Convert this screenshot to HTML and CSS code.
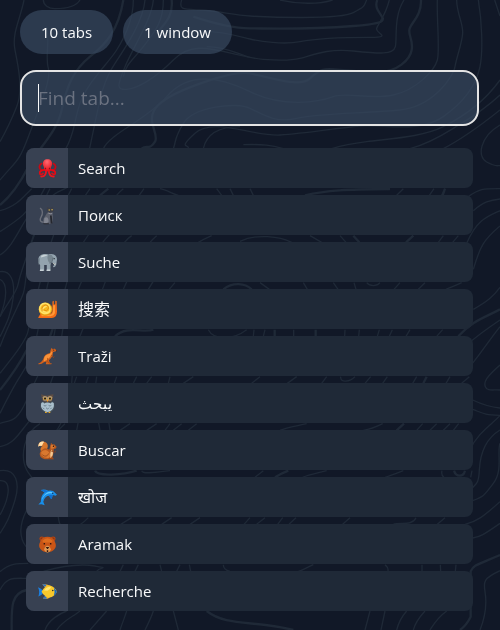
FILE: index.html
```html
<!DOCTYPE html>
<html lang="en">
<head>
  <meta charset="UTF-8">
  <meta name="viewport" content="width=device-width, initial-scale=1.0">
  <title>Find tab</title>
  <link rel="stylesheet" href="styles.css">
</head>
<body>

<!-- Topographic background -->
<svg class="topo" viewBox="0 0 1500 1890" preserveAspectRatio="xMidYMin slice" aria-hidden="true">
  <g class="thin">
    <path d="M72 0C60 60 35 100 45 150S70 270 50 320S20 390 0 425"/>
    <path d="M130 0C130 15 145 26 165 26S225 25 240 0"/>
    <path d="M140 80C150 120 135 170 145 205S115 330 85 410S50 480 0 540"/>
    <path d="M400 0C400 60 375 110 350 150S260 250 240 310S225 400 195 450S120 600 90 640S40 740 0 765"/>
    <path d="M435 0C430 60 385 130 345 190S300 300 270 440S180 560 155 590S110 690 95 727S80 850 70 880S30 960 0 1040"/>
    <path d="M460 0C455 60 400 140 375 200S350 270 380 268S460 240 520 180S640 150 750 172"/>
    <path d="M490 0C490 60 470 90 430 140S380 190 370 230"/>
    <path d="M545 0C535 30 550 28 600 30S700 45 750 48S1020 60 1060 38S1090 20 1100 0"/>
    <path d="M840 0C900 14 960 12 998 0"/>
    <path d="M600 95C650 90 720 110 750 117S850 135 900 125S1040 112 1110 112S1125 100 1130 85S1155 50 1168 0"/>
    <path d="M620 140C680 140 720 165 750 172S860 185 900 175S980 145 1060 153S1180 165 1186 140S1180 50 1212 0"/>
    <path d="M1312 0C1310 60 1320 150 1312 180S1250 270 1180 285S1040 275 1000 290S850 325 750 275S560 220 500 290S330 400 310 446"/>
    <path d="M1370 0C1370 40 1390 70 1388 100S1370 170 1365 200S1300 320 1200 330S950 340 890 355S790 345 750 325S580 320 550 370S530 420 520 446"/>
    <path d="M1435 0C1445 60 1450 150 1440 200S1400 300 1330 350S1150 372 1080 378S920 400 840 405S640 350 585 400S570 430 565 446"/>
    <path d="M1484 0L1500 48"/>
    <path d="M1500 240C1450 310 1390 350 1330 380S1180 415 1100 425S1010 442 980 450"/>
    <path d="M1500 285C1440 340 1400 360 1360 385S1270 435 1230 446"/>
    <path d="M1500 330C1450 370 1380 420 1330 446"/>
    <path d="M1500 375C1440 410 1430 470 1460 486S1490 496 1500 497"/>
    <path d="M730 434C790 432 815 436 850 446M610 446C620 400 660 380 720 380"/>
    <path d="M1405 590C1440 565 1450 566 1500 566M1420 632C1450 606 1470 600 1500 597M1400 730C1430 660 1460 650 1500 632M1420 808C1440 740 1450 720 1500 678M1420 928C1460 905 1480 890 1500 862"/>
    <path d="M0 632C50 620 70 590 95 566M0 695C70 650 80 640 110 586"/>
    <path d="M150 566C130 600 120 640 100 707S60 820 55 850S20 910 0 950"/>
    <path d="M215 566C190 610 180 650 160 707S120 850 115 868S90 960 85 990S40 1070 0 1120"/>
    <path d="M270 566C230 620 220 660 195 707S145 840 140 868S120 960 110 1009S80 1100 60 1130S20 1200 0 1240"/>
    <path d="M370 566C340 590 310 640 250 727S205 830 200 850S170 940 165 990S110 1130 80 1200S30 1260 0 1270"/>
    <path d="M432 566C400 610 370 660 325 707S250 830 235 868S190 950 185 1010S170 1100 155 1140S140 1210 100 1250S50 1330 0 1340"/>
    <path d="M480 566C500 570 515 580 535 586M650 566L665 586M690 566L700 586M750 566L760 586"/>
    <path d="M395 707C360 730 330 800 315 848S260 950 240 1009S220 1080 215 1150"/>
    <path d="M470 707C430 740 400 800 370 868M635 707C580 730 480 800 445 868M525 848C480 900 430 960 400 989"/>
    <path d="M720 724C770 700 840 710 875 727M930 707L965 727M1020 707L1038 727M1330 707L1315 727M1375 707L1358 727M1210 566L1190 586M1302 566L1288 586M1335 566L1325 586"/>
    <path d="M780 848L808 868M910 848L922 868M1000 848L1014 868M1062 848L1068 868M1100 848C1110 860 1130 860 1140 848M1200 848L1182 868M1275 848L1255 868M1385 848C1360 860 1350 862 1338 868"/>
    <path d="M625 989C640 1020 700 1020 740 989M762 989L760 1009M795 989L790 1009M881 989V1009M1035 989L1034 1009M1078 989L1076 1009M1138 989L1132 1009M1177 989L1168 1009M1230 989L1218 1009M1328 989L1310 1009"/>
    <path d="M0 815C30 810 45 840 40 890S20 970 0 1010M0 838C25 850 20 900 0 950"/>
    <path d="M1400 1035C1440 1000 1470 980 1500 960M1400 1110C1430 1080 1460 1030 1500 980M1500 1095C1460 1130 1450 1145 1456 1160S1480 1168 1500 1170M1418 1200C1460 1220 1480 1222 1500 1224M1418 1228C1450 1240 1450 1244 1500 1246C1480 1270 1430 1300 1410 1350"/>
    <path d="M230 1130C210 1180 200 1250 170 1291M265 1130C250 1170 240 1240 230 1291M290 1130C280 1180 290 1240 300 1291M350 1130C330 1180 320 1240 330 1291M410 1130L400 1150M455 1130L440 1150M510 1130L505 1150M580 1130L550 1150M780 1130L755 1150M890 1130L862 1150M980 1130L965 1150M1022 1130C1020 1150 1050 1145 1065 1130M1112 1130L1095 1150M1162 1130L1148 1150M1250 1130L1238 1150M1350 1130L1338 1150M1408 1130L1385 1150"/>
    <path d="M120 1271C70 1300 60 1370 80 1410S170 1490 175 1552S240 1580 265 1553M195 1271L175 1291M390 1271L360 1291M470 1271L440 1291M510 1271L495 1291M545 1271L520 1291M590 1271L565 1291M920 1271C890 1278 860 1282 840 1291M1148 1271C1130 1280 1110 1288 1090 1291M1268 1271L1250 1291M1310 1271L1290 1291M1350 1271L1330 1291M1376 1271L1360 1291"/>
    <path d="M1500 1290C1450 1320 1440 1370 1438 1410S1430 1450 1418 1463M1500 1330C1490 1360 1510 1410 1480 1450S1450 1490 1418 1502M1326 1412C1324 1420 1326 1428 1332 1432M1416 1412L1412 1432M425 1412C430 1425 470 1415 510 1412M790 1412L765 1432M980 1412C950 1420 930 1422 908 1432M1210 1412C1190 1420 1170 1428 1155 1432"/>
    <path d="M0 1412C50 1405 60 1450 45 1500S20 1570 0 1600M0 1442C40 1440 25 1500 0 1545M80 1530C60 1570 55 1610 78 1640"/>
    <path d="M395 1553L362 1573M515 1553L485 1573M600 1553L570 1573M750 1553L732 1573M795 1553L770 1573M848 1553L833 1573M888 1553L867 1573M1050 1553L1028 1573M1248 1553C1235 1580 1200 1565 1180 1573M1335 1553L1312 1573M1500 1505C1450 1550 1430 1565 1395 1573M1500 1570C1450 1605 1440 1610 1418 1614"/>
    <path d="M0 1715C30 1690 50 1690 85 1690M0 1770C20 1730 40 1735 80 1735M130 1714C180 1700 240 1690 285 1698S300 1700 290 1714M370 1694L360 1714M415 1694L405 1714M480 1694L485 1714M540 1694L530 1714M568 1694L572 1714M670 1694C670 1705 675 1710 690 1714M940 1694C920 1702 910 1710 895 1714M1155 1694C1163 1700 1165 1706 1164 1714M1266 1694V1714M1321 1694L1322 1714M1368 1694L1366 1714"/>
    <path d="M1500 1712C1450 1735 1450 1745 1455 1775S1460 1840 1440 1890M1110 1833L1095 1890M1155 1833L1143 1890M1220 1833C1205 1850 1195 1870 1190 1890M1275 1833C1255 1855 1245 1870 1240 1890M1340 1833C1310 1855 1300 1875 1290 1890M135 1890C145 1860 180 1840 200 1833M170 1890C190 1860 220 1850 240 1833M270 1890L320 1833M360 1890C370 1860 375 1850 380 1833M435 1890C445 1870 455 1850 460 1833M535 1890L520 1833"/>
  </g>
  <g class="thick">
    <path d="M370 0C355 90 320 130 270 170S200 260 185 330S110 450 85 500S30 590 0 615"/>
    <path d="M515 0C520 50 495 70 470 100"/>
    <path d="M580 50C640 70 700 85 750 85S900 90 1060 78S1110 50 1132 0"/>
    <path d="M1263 0C1265 50 1230 70 1228 90S1240 120 1235 150S1190 215 1140 215S1020 210 1000 208S960 205 930 235S800 230 750 220S520 270 475 315S480 400 465 425S440 435 425 446"/>
    <path d="M325 566L300 586M915 586C980 570 1040 568 1170 567M1335 566L1328 586M1060 707L1078 727M1240 707L1218 727M670 868C700 845 735 850 755 868"/>
    <path d="M1500 928C1450 955 1420 960 1375 1009M345 1009C380 975 430 1000 460 989M824 989V1009M947 989V1009M190 868C180 900 170 960 150 1009"/>
    <path d="M0 1170C40 1120 60 1090 80 1050M1280 1130L1270 1150M1212 1271L1190 1291M285 1412C290 1430 370 1425 410 1412M865 1412C840 1422 835 1426 825 1432M1362 1412C1368 1432 1390 1432 1395 1412"/>
    <path d="M80 1770C30 1780 35 1830 35 1890M1500 1665C1430 1695 1420 1695 1412 1714V1850Q1400 1875 1380 1890M620 1833C680 1880 760 1860 880 1890"/>
  </g>
</svg>

<main class="popup">
  <div class="stats">
    <span class="pill">10 tabs</span>
    <span class="pill">1 window</span>
  </div>

  <div class="search">
    <input class="search-input" type="text" placeholder="Find tab..." aria-label="Find tab" autocomplete="off">
    <span class="caret"></span>
  </div>

  <!-- Open tabs -->
  <ul class="tabs">
    <li>
      <button class="tab" type="button">
        <span class="tab-icon">
          <svg viewBox="0 0 54 54" aria-hidden="true">
            <defs>
              <radialGradient id="octo" cx=".45" cy=".2" r=".8"><stop offset="0" stop-color="#ff6b73"/><stop offset="1" stop-color="#e50914"/></radialGradient>
            </defs>
            <g fill="none" stroke-linecap="round" stroke-width="5">
              <path stroke="#c80814" d="M19 30C12 36 4 30 4 22Q5 15 10 13M35 30C42 36 50 30 50 22Q49 15 44 13"/>
              <path stroke="#e50914" d="M20 31Q4 32 5 40T14 41M34 31Q50 32 49 40T40 41"/>
              <path stroke="#f0141e" d="M23 30Q24 44 16 49L9 50M31 30Q30 44 38 49L45 50"/>
            </g>
            <path fill="url(#octo)" d="M27 1C18 1 13 7 14 15C15 21 19 24 18 32Q27 39 36 32C35 24 39 21 40 15C41 7 36 1 27 1Z"/>
            <path fill="#86131b" d="M20 25h3v4h-3zM31 25h3v4h-3z"/>
          </svg>
        </span>
        <span class="tab-title">Search</span>
      </button>
    </li>
    <li>
      <button class="tab" type="button">
        <span class="tab-icon">
          <svg viewBox="0 0 54 54" aria-hidden="true">
            <path fill="none" stroke="#6a6e79" stroke-width="4" stroke-linecap="round" d="M20 46C5 48 4 39 9 31S14 11 7 7"/>
            <path fill="#5b5f6b" d="M26 19L34 16L41 20C43 29 43 38 40 49L31 51H18C13 47 14 35 20 29Z"/>
            <path fill="#80838e" d="M18 35C24 28 31 34 30 45L25 49H17Z"/>
            <path fill="#25272e" d="M34 27L36 50H41L39 27ZM15 49H31V52H16Z"/>
            <path fill="#3c3e47" d="M26 3L33 6L41 2L44 9C46 16 39 21 32 19C26 18 24 11 26 3Z"/>
            <path fill="#e3c051" d="M30 10h4v3h-4zM38 9h4v3h-4z"/>
            <path fill="none" stroke="#a2a4ac" stroke-width="2" d="M29 20Q35 24 41 20"/>
          </svg>
        </span>
        <span class="tab-title" lang="ru">Поиск</span>
      </button>
    </li>
    <li>
      <button class="tab" type="button">
        <span class="tab-icon">
          <svg viewBox="0 0 54 54" aria-hidden="true">
            <path fill="#65717b" d="M8 28h10v23H9zM28 29h9v21h-9z"/>
            <path fill="#93a3ae" d="M1 15C5 3 17 2 30 4C43 0 53 6 54 17L52 33Q49 42 43 40V36Q47 37 46 29L38 26L34 35V50H25V34H17V50H6V34L1 29Z"/>
            <path fill="#76858f" d="M28 7Q39 0 43 13Q42 27 34 30Q24 20 28 7Z"/>
            <path fill="#c8d2d7" d="M9 8Q20 2 27 7Q19 9 9 13ZM6 47h10v4H5zM25 47h10v4H24z"/>
            <path fill="none" stroke="#56636d" stroke-width="2" d="M3 15L2 34M43 13Q42 26 34 30"/>
            <circle cx="46" cy="16" r="2" fill="#20272d"/>
            <path fill="none" stroke="#ece9d8" stroke-width="2" d="M43 28Q45 35 50 31"/>
          </svg>
        </span>
        <span class="tab-title" lang="de">Suche</span>
      </button>
    </li>
    <li>
      <button class="tab" type="button">
        <span class="tab-icon">
          <svg viewBox="0 0 54 54" aria-hidden="true">
            <path fill="#f36b16" d="M1 49L7 39H34Q40 39 41 29V4L45 2V13L49 12V2L53 3L54 33Q54 51 39 51H1Z"/>
            <path fill="#ff9b38" d="M43 15h5v23q-3 7-12 8H10v-4h25q8-2 8-13z"/>
            <circle cx="21" cy="26" r="19" fill="#f7b91f"/>
            <path fill="none" stroke="#ffe36b" stroke-width="4" d="M34 32Q26 42 14 37T6 20T22 10T34 25T20 34T15 23T24 19"/>
            <path fill="none" stroke="#d98210" stroke-width="2" d="M5 36Q17 49 32 40T36 14M12 32Q9 16 22 14Q32 16 29 26Q24 35 17 28"/>
          </svg>
        </span>
        <span class="tab-title" lang="zh">搜索</span>
      </button>
    </li>
    <li>
      <button class="tab" type="button">
        <span class="tab-icon">
          <svg viewBox="0 0 54 54" aria-hidden="true">
            <path fill="#d0601c" d="M1 47Q12 43 16 31Q19 20 34 17L36 8L39 2L42 7L46 4L54 10L49 13L43 14Q43 25 36 33L31 38L34 46H39L38 49H22L24 41L17 43Q10 50 1 49Z"/>
            <path fill="#f8933a" d="M17 34Q18 22 34 19L39 12L41 15Q39 24 33 30L24 38L16 41Z"/>
            <path fill="none" stroke="#a8480f" stroke-width="2" d="M37 23L44 30L46 27M27 31L28 43L35 47"/>
            <path fill="#30150a" d="M43 8h3v2h-3zM52 9h2v3h-2z"/>
          </svg>
        </span>
        <span class="tab-title" lang="hr">Traži</span>
      </button>
    </li>
    <li>
      <button class="tab" type="button">
        <span class="tab-icon">
          <svg viewBox="0 0 54 54" aria-hidden="true">
            <path fill="#44515b" d="M12 22Q3 29 8 41L15 49L20 52H34Q46 48 47 36Q48 25 40 20Z"/>
            <path fill="#5d4d42" d="M9 1Q18 5 26 4T44 1L42 14Q39 24 27 24T11 15Z"/>
            <path fill="#a8957c" d="M13 9Q19 3 27 9Q35 3 41 9L38 19H16Z"/>
            <path fill="#e9a925" d="M16 10h8v6h-8zM30 10h8v6h-8zM20 50h5v4h-5zM30 50h5v4h-5z"/>
            <circle cx="20" cy="13" r="3" fill="#241d18"/>
            <circle cx="34" cy="13" r="3" fill="#241d18"/>
            <path fill="#f39a22" d="M24 16h6l-3 7z"/>
            <path fill="#a9bfcc" d="M9 26Q14 21 18 27Q27 21 36 27Q40 21 45 26Q47 41 36 48L27 52L18 48Q6 40 9 26Z"/>
            <path fill="none" stroke="#526675" stroke-width="2" d="M16 31l4 4 4-4M30 31l4 4 4-4M23 39l4 4 4-4M14 39l4 4M39 39l-4 4"/>
          </svg>
        </span>
        <span class="tab-title" lang="ar">يبحث</span>
      </button>
    </li>
    <li>
      <button class="tab" type="button">
        <span class="tab-icon">
          <svg viewBox="0 0 54 54" aria-hidden="true">
            <path fill="#d8762b" d="M1 14C1 3 12-1 20 3C31 8 29 20 23 26L13 30C4 29 6 18 13 15Z"/>
            <path fill="#ffdfab" d="M1 13C2 2 12 0 18 3C12 6 15 13 9 14Q4 12 1 17Z"/>
            <path fill="#b5581f" d="M13 24Q22 17 32 25L35 14L37 5L41 10L46 9L53 16L51 21L45 23L44 34L41 47L45 52H19Q3 48 5 35Q6 28 13 24Z"/>
            <path fill="#d9782f" d="M9 31Q21 20 31 31T30 48Q18 49 10 41ZM36 12L42 11L49 16L43 21L37 22Z"/>
            <path fill="#f4c892" d="M38 24Q45 32 41 41L35 49Q34 36 36 29Z"/>
            <path fill="none" stroke="#8c421a" stroke-width="2" d="M12 39Q24 49 31 35M35 28L49 32L50 27M30 50H44"/>
            <circle cx="44" cy="15" r="2" fill="#251309"/>
          </svg>
        </span>
        <span class="tab-title" lang="es">Buscar</span>
      </button>
    </li>
    <li>
      <button class="tab" type="button">
        <span class="tab-icon">
          <svg viewBox="0 0 54 54" aria-hidden="true">
            <path fill="#188ee9" d="M1 47L8 40C8 27 12 17 19 13L8 6Q18 2 29 8Q42 5 49 14L54 19L50 22L42 20L39 31Q33 29 32 22Q20 22 15 39L19 49L10 46Z"/>
            <path fill="#5dc7ff" d="M11 34Q14 19 27 12Q38 8 47 15L36 15Q22 16 16 25Z"/>
            <path fill="#0f6fd0" d="M31 20L42 20L39 31Q33 29 31 20ZM8 6L20 6L29 9L19 13Z"/>
            <circle cx="42" cy="15" r="2" fill="#0b2856"/>
          </svg>
        </span>
        <span class="tab-title" lang="hi">खोज</span>
      </button>
    </li>
    <li>
      <button class="tab" type="button">
        <span class="tab-icon">
          <svg viewBox="0 0 54 54" aria-hidden="true">
            <circle cx="11" cy="11" r="7" fill="#b64510"/>
            <circle cx="43" cy="11" r="7" fill="#b64510"/>
            <circle cx="11" cy="11" r="4" fill="#8a3614"/>
            <circle cx="43" cy="11" r="4" fill="#8a3614"/>
            <path fill="#c95516" d="M27 5Q43 5 48 19Q54 32 47 40Q39 49 27 49T7 40Q0 32 6 19Q11 5 27 5Z"/>
            <path fill="#dd6c1e" d="M12 17Q27 2 42 17L38 21H16Z"/>
            <path fill="#dd9550" d="M20 34Q27 27 34 34L37 42Q32 50 27 50T17 42Z"/>
            <path fill="#321710" d="M16 23h4v4h-4zM34 23h4v4h-4zM22 34h10l-4 6h-2zM25 43h4v5h-4z"/>
          </svg>
        </span>
        <span class="tab-title" lang="tr">Aramak</span>
      </button>
    </li>
    <li>
      <button class="tab" type="button">
        <span class="tab-icon">
          <svg viewBox="0 0 54 54" aria-hidden="true">
            <path fill="#1b7fe0" d="M0 15Q8 17 14 24V32Q8 40 1 41Q6 28 0 15Z"/>
            <path fill="#f3b52a" d="M12 7Q24 4 35 11L22 19Q18 11 12 7ZM14 46Q20 42 22 37L34 44Q25 51 14 46Z"/>
            <path fill="#2a6fc4" d="M12 7Q17 6 22 7L24 12L18 13ZM14 46L20 40L26 46Q20 49 14 46Z"/>
            <path fill="#f8c82b" d="M10 28Q19 10 34 10Q46 12 54 28Q46 43 33 44Q18 43 10 28Z"/>
            <path fill="#ffe675" d="M17 24Q25 12 37 14Q35 22 27 25Z"/>
            <path fill="#1567bf" d="M45 16Q51 22 54 28Q51 35 45 39Q49 28 45 16Z"/>
            <circle cx="42" cy="24" r="2" fill="#101e32"/>
          </svg>
        </span>
        <span class="tab-title" lang="fr">Recherche</span>
      </button>
    </li>
  </ul>
</main>

</body>
</html>
```
FILE: styles.css
```css
/* General */
* {
  box-sizing: border-box;
}

body {
  margin: 0;
  background-color: #111827;
  color: #f9fafb;
  font-family: "Segoe UI", "Open Sans", "Noto Sans", "Noto Sans CJK SC", sans-serif;
  font-size: 15px;
}

/* Background lines */
.topo {
  position: fixed;
  inset: 0;
  z-index: -1;
  width: 100%;
  height: 100%;
}

.topo path {
  fill: none;
  stroke: #1f2937;
}

.thin {
  stroke-width: 4;
}

.thick {
  stroke-width: 7;
}

.popup {
  padding: 10px 21px 18px 20px;
}

/* Counters */
.stats {
  display: flex;
  gap: 10px;
}

.pill {
  padding: 0 21px;
  border-radius: 22px;
  background-color: rgba(56, 72, 95, 0.7);
  line-height: 44px;
}

/* Search box */
.search {
  position: relative;
  margin-top: 16px;
}

.search-input {
  display: block;
  width: 100%;
  height: 56px;
  padding: 0 16px;
  border: 2px solid #e5e5e5;
  border-radius: 16px;
  outline: none;
  background-color: rgba(56, 72, 95, 0.7);
  color: #f9fafb;
  caret-color: transparent;
  font-family: inherit;
  font-size: 19px;
}

.search-input::placeholder {
  color: #6b7280;
  opacity: 1;
}

.caret {
  position: absolute;
  top: 14px;
  left: 18px;
  width: 1px;
  height: 28px;
  background-color: #f9fafb;
}

/* Tab list */
.tabs {
  display: grid;
  gap: 7px;
  margin: 22px 6px 0;
  padding: 0;
  list-style: none;
}

.tab {
  display: flex;
  width: 100%;
  height: 40px;
  padding: 0;
  border: none;
  border-radius: 8px;
  overflow: hidden;
  background-color: #1f2937;
  color: #f9fafb;
  font-family: inherit;
  font-size: 15px;
  line-height: 40px;
  text-align: left;
  cursor: pointer;
}

.tab:hover {
  background-color: #273449;
}

.tab-icon {
  display: flex;
  align-items: center;
  justify-content: center;
  width: 42px;
  height: 40px;
  background-color: #384152;
}

.tab-icon svg {
  width: 19px;
  height: 19px;
}

.tab-title {
  padding: 0 10px;
}

.tab-title:lang(zh),
.tab-title:lang(hi) {
  font-size: 16px;
}
```
